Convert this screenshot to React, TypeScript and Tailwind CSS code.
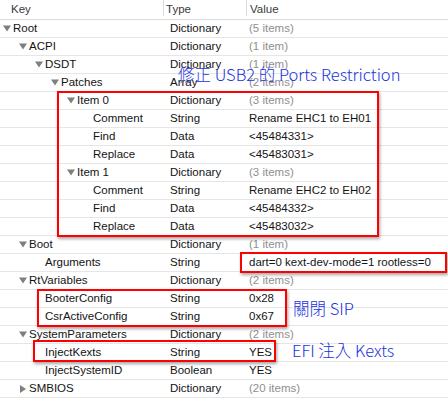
import React from "react";

type Row = { d: number; k: string; t: string; v: string; exp?: "down" | "right"; gray?: boolean };

const rows: Row[] = [
  { d: 0, k: "Root", t: "Dictionary", v: "(5 items)", exp: "down", gray: true },
  { d: 1, k: "ACPI", t: "Dictionary", v: "(1 item)", exp: "down", gray: true },
  { d: 2, k: "DSDT", t: "Dictionary", v: "(1 item)", exp: "down", gray: true },
  { d: 3, k: "Patches", t: "Array", v: "(2 items)", exp: "down", gray: true },
  { d: 4, k: "Item 0", t: "Dictionary", v: "(3 items)", exp: "down", gray: true },
  { d: 5, k: "Comment", t: "String", v: "Rename EHC1 to EH01" },
  { d: 5, k: "Find", t: "Data", v: "<45484331>" },
  { d: 5, k: "Replace", t: "Data", v: "<45483031>" },
  { d: 4, k: "Item 1", t: "Dictionary", v: "(3 items)", exp: "down", gray: true },
  { d: 5, k: "Comment", t: "String", v: "Rename EHC2 to EH02" },
  { d: 5, k: "Find", t: "Data", v: "<45484332>" },
  { d: 5, k: "Replace", t: "Data", v: "<45483032>" },
  { d: 1, k: "Boot", t: "Dictionary", v: "(1 item)", exp: "down", gray: true },
  { d: 2, k: "Arguments", t: "String", v: "dart=0 kext-dev-mode=1 rootless=0" },
  { d: 1, k: "RtVariables", t: "Dictionary", v: "(2 items)", exp: "down", gray: true },
  { d: 2, k: "BooterConfig", t: "String", v: "0x28" },
  { d: 2, k: "CsrActiveConfig", t: "String", v: "0x67" },
  { d: 1, k: "SystemParameters", t: "Dictionary", v: "(2 items)", exp: "down", gray: true },
  { d: 2, k: "InjectKexts", t: "String", v: "YES" },
  { d: 2, k: "InjectSystemID", t: "Boolean", v: "YES" },
  { d: 1, k: "SMBIOS", t: "Dictionary", v: "(20 items)", exp: "right", gray: true },
];

const padClasses = ["pl-[3px]", "pl-[19px]", "pl-[35px]", "pl-[51px]", "pl-[67px]", "pl-[83px]"];

function Tri({ dir }: { dir: "down" | "right" }) {
  return dir === "down" ? (
    <svg width="8" height="7" viewBox="0 0 8 7" className="shrink-0">
      <path d="M0 0.5 L8 0.5 L4 6.5 Z" fill="#7f7f7f" />
    </svg>
  ) : (
    <svg width="8" height="8" viewBox="0 0 8 8" className="shrink-0">
      <path d="M1 0 L7 4 L1 8 Z" fill="#7f7f7f" />
    </svg>
  );
}

const blueFont = { fontFamily: '"Noto Sans CJK TC", "Noto Sans", sans-serif', fontWeight: 300 };

export default function App() {
  return (
    <div
      className="relative w-[448px] h-[409px] bg-white overflow-hidden text-[11.5px] text-[#141414]"
      style={{ fontFamily: '"Liberation Sans", Arial, sans-serif' }}
    >
      <div className="flex h-[20px] border-b border-[#dcdcdc] items-center text-[#3a3a3a]">
        <div className="w-[163px] pl-[11px]">Key</div>
        <div className="w-px h-[16px] bg-[#dcdcdc] self-start" />
        <div className="w-[82px] pl-[2px]">Type</div>
        <div className="w-px h-[16px] bg-[#dcdcdc] self-start" />
        <div className="flex-1 pl-[3px]">Value</div>
      </div>
      {rows.map((r, i) => (
        <div key={i} className="flex h-[18px] border-b border-[#e6e6e6] items-center">
          <div className={`w-[164px] flex items-center ${padClasses[r.d]}`}>
            {r.exp ? <Tri dir={r.exp} /> : <span className="w-[8px] shrink-0" />}
            <span className="ml-[2px] whitespace-nowrap">{r.k}</span>
          </div>
          <div className="w-[85px] pl-[6px] whitespace-nowrap">{r.t}</div>
          <div className={`flex-1 whitespace-nowrap ${r.gray ? "text-[#8f8f8f]" : ""}`}>{r.v}</div>
        </div>
      ))}

      {/* red highlight boxes */}
      <div className="absolute left-[57px] top-[91px] w-[322px] h-[146px] border-2 border-[#f00] shadow-[1px_2px_3px_rgba(0,0,0,0.35)]" />
      <div className="absolute left-[240px] top-[252px] w-[207px] h-[21px] border-2 border-[#f00] shadow-[1px_2px_3px_rgba(0,0,0,0.35)]" />
      <div className="absolute left-[37px] top-[289px] w-[250px] h-[38px] border-2 border-[#f00] shadow-[1px_2px_3px_rgba(0,0,0,0.35)]" />
      <div className="absolute left-[33px] top-[340px] w-[243px] h-[22px] border-2 border-[#f00] shadow-[1px_2px_3px_rgba(0,0,0,0.35)]" />

      {/* blue annotations */}
      <div
        className="absolute left-[178px] top-[63px] text-[16.5px] leading-[22px] text-[#2233dd] whitespace-nowrap"
        style={blueFont}
      >
        修正 USB2 的 Ports Restriction
      </div>
      <div
        className="absolute left-[293px] top-[297px] text-[16.5px] leading-[22px] text-[#2233dd] whitespace-nowrap"
        style={blueFont}
      >
        關閉 SIP
      </div>
      <div
        className="absolute left-[292px] top-[339px] text-[16.5px] leading-[22px] text-[#2233dd] whitespace-nowrap"
        style={blueFont}
      >
        EFI 注入 Kexts
      </div>
    </div>
  );
}
